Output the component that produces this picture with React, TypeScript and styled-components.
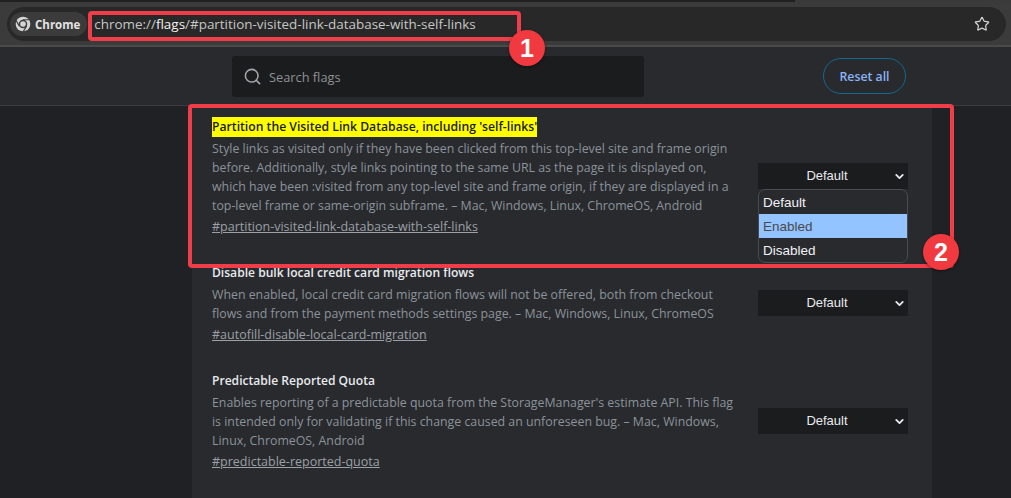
import * as React from "react";
import styled, { createGlobalStyle } from "styled-components";
import { Search, Star, ChevronDown } from "lucide-react";

const GlobalStyle = createGlobalStyle`
  html, body {
    margin: 0;
    padding: 0;
    height: 100%;
    overflow: hidden;
    background: #202124;
    font-family: "Open Sans", "Noto Sans", sans-serif;
  }
`;

const flags = [
  {
    title: "Partition the Visited Link Database, including 'self-links'",
    marked: true,
    lines: [
      "Style links as visited only if they have been clicked from this top-level site and frame origin",
      "before. Additionally, style links pointing to the same URL as the page it is displayed on,",
      "which have been :visited from any top-level site and frame origin, if they are displayed in a",
      "top-level frame or same-origin subframe. – Mac, Windows, Linux, ChromeOS, Android",
    ],
    link: "#partition-visited-link-database-with-self-links",
    open: true,
  },
  {
    title: "Disable bulk local credit card migration flows",
    lines: [
      "When enabled, local credit card migration flows will not be offered, both from checkout",
      "flows and from the payment methods settings page. – Mac, Windows, Linux, ChromeOS",
    ],
    link: "#autofill-disable-local-card-migration",
  },
  {
    title: "Predictable Reported Quota",
    lines: [
      "Enables reporting of a predictable quota from the StorageManager's estimate API. This flag",
      "is intended only for validating if this change caused an unforeseen bug. – Mac, Windows,",
      "Linux, ChromeOS, Android",
    ],
    link: "#predictable-reported-quota",
  },
];

const ChromeLogo = () => (
  <svg width="16" height="16" viewBox="0 0 24 24" fill="none">
    <circle cx="12" cy="12" r="11" fill="#d6d6d6" />
    <circle cx="12" cy="12" r="6.4" fill="#3c3c3c" />
    <circle cx="12" cy="12" r="4.2" fill="#d6d6d6" />
    <path d="M12 5.7h10.5M6.6 15.2 1.4 6.4M17.5 15.2 12 23.6" stroke="#3c3c3c" strokeWidth="1.7" />
  </svg>
);

const App: React.FunctionComponent = () => {
  return (
    <Page>
      <GlobalStyle />
      <TopStrip />
      <BrowserBar>
        <Omnibox>
          <SiteChip>
            <ChromeLogo />
            Chrome
          </SiteChip>
          <Url>
            chrome://<strong>flags</strong>/#partition-visited-link-database-with-self-links
          </Url>
          <StarButton>
            <Star size={16} strokeWidth={1.8} />
          </StarButton>
        </Omnibox>
      </BrowserBar>

      <FlagsHeader>
        <SearchBox>
          <Search size={19} strokeWidth={2} color="#a3a5a8" />
          Search flags
        </SearchBox>
        <ResetButton>Reset all</ResetButton>
      </FlagsHeader>

      <Main>
        <Card>
          {flags.map((flag) => (
            <FlagRow key={flag.link}>
              <FlagText>
                <FlagTitle>
                  {flag.marked ? <Mark>{flag.title}</Mark> : flag.title}
                </FlagTitle>
                <FlagDesc>
                  {flag.lines.map((line) => (
                    <div key={line}>{line}</div>
                  ))}
                </FlagDesc>
                <FlagLink>{flag.link}</FlagLink>
              </FlagText>
              <SelectWrap>
                <Select>
                  Default
                  <SelectChevron>
                    <ChevronDown size={13} strokeWidth={3.4} />
                  </SelectChevron>
                </Select>
                {flag.open && (
                  <Dropdown>
                    <Option>Default</Option>
                    <Option $active>Enabled</Option>
                    <Option>Disabled</Option>
                  </Dropdown>
                )}
              </SelectWrap>
            </FlagRow>
          ))}
        </Card>
      </Main>

      <RedBox $x={88} $y={11} $w={433} $h={30} />
      <RedBox $x={188} $y={104} $w={766} $h={164} />
      <Badge $x={509} $y={30}>1</Badge>
      <Badge $x={923} $y={234}>2</Badge>
    </Page>
  );
};

const Page = styled.div`
  position: relative;
  width: 1011px;
  height: 498px;
  overflow: hidden;
  background: #202124;
`;

const TopStrip = styled.div`
  height: 2px;
  background: linear-gradient(90deg, #202020 0, #202020 795px, #3a3a3a 795px);
`;

const BrowserBar = styled.div`
  height: 45px;
  padding: 5px 5px 0 7px;
  box-sizing: border-box;
  background: #3b3b3b;
  border-bottom: 2px solid #4a4a4a;
`;

const Omnibox = styled.div`
  display: flex;
  align-items: center;
  height: 34px;
  padding: 0 16px 0 3px;
  border-radius: 17px;
  background: #282828;
`;

const SiteChip = styled.div`
  display: flex;
  align-items: center;
  gap: 4px;
  height: 24px;
  padding: 0 7px 0 5px;
  border-radius: 12px;
  background: #3b3b3b;
  color: #e3e3e3;
  font: 700 11.5px "Open Sans", sans-serif;
`;

const Url = styled.div`
  flex: 1;
  margin-left: 7px;
  color: #c4c7c5;
  font: 400 13.45px "Open Sans", sans-serif;
  white-space: nowrap;

  strong {
    color: #f1f1f1;
    font-weight: 400;
  }
`;

const StarButton = styled.div`
  display: flex;
  color: #d4d4d4;
`;

const FlagsHeader = styled.div`
  display: flex;
  align-items: flex-start;
  height: 59px;
  padding: 9px 0 0 232px;
  box-sizing: border-box;
  background: #292a2d;
  border-bottom: 1px solid #3a3b3e;
`;

const SearchBox = styled.div`
  display: flex;
  align-items: center;
  gap: 7px;
  width: 412px;
  height: 41px;
  padding-left: 11px;
  box-sizing: border-box;
  border-radius: 3px;
  background: #1b1c1e;
  color: #8f9194;
  font: 400 12.8px "Open Sans", sans-serif;
`;

const ResetButton = styled.div`
  display: flex;
  align-items: center;
  justify-content: center;
  width: 83px;
  height: 36px;
  margin: 2px 0 0 179px;
  box-sizing: border-box;
  border: 1px solid #0f6a94;
  border-radius: 18px;
  color: #8ab4f8;
  font: 600 12.3px "Open Sans", sans-serif;
`;

const Main = styled.div`
  display: flex;
  padding-left: 192px;
`;

const Card = styled.div`
  width: 740px;
  height: 392px;
  background: #292a2d;
`;

const FlagRow = styled.div`
  display: flex;
  align-items: center;
  justify-content: space-between;
  padding: 10px 24px 16px 20px;
`;

const FlagText = styled.div`
  width: 530px;
`;

const FlagTitle = styled.div`
  height: 20px;
  margin-bottom: 3px;
  color: #e8eaed;
  font: 600 12.1px/21px "Open Sans", sans-serif;
`;

const Mark = styled.span`
  display: inline-block;
  height: 20px;
  background: #ffff00;
  color: #202124;
  font-size: 12.2px;
  line-height: 20px;
`;

const FlagDesc = styled.div`
  color: #8b939b;
  font: 400 12.35px/19px "Open Sans", sans-serif;
  white-space: nowrap;
`;

const FlagLink = styled.div`
  margin-top: 2px;
  color: #9aa0a6;
  font: 400 12.5px/19px "Open Sans", sans-serif;
  text-decoration: underline;
`;

const SelectWrap = styled.div`
  position: relative;
  width: 150px;
`;

const Select = styled.div`
  position: relative;
  height: 26px;
  padding-right: 12px;
  background: #1b1c1e;
  color: #e8eaed;
  font: 400 13px/26px "Liberation Sans", Arial, sans-serif;
  text-align: center;
`;

const SelectChevron = styled.span`
  position: absolute;
  right: 2px;
  top: 7px;
  display: flex;
  color: #e8eaed;
`;

const Dropdown = styled.div`
  position: absolute;
  top: 26px;
  left: 0;
  right: 0;
  border: 1px solid #4a4b4e;
  border-radius: 7px;
  overflow: hidden;
  background: #292a2d;
  z-index: 2;
`;

const Option = styled.div<{ $active?: boolean }>`
  height: 24px;
  padding-left: 4px;
  background: ${(p) => (p.$active ? "#93c4ff" : "transparent")};
  color: ${(p) => (p.$active ? "#4a4a4e" : "#f0f2f5")};
  font: 400 13.5px/26px "Liberation Sans", Arial, sans-serif;
`;

const RedBox = styled.div<{ $x: number; $y: number; $w: number; $h: number }>`
  position: absolute;
  left: ${(p) => p.$x}px;
  top: ${(p) => p.$y}px;
  width: ${(p) => p.$w}px;
  height: ${(p) => p.$h}px;
  box-sizing: border-box;
  border: 4px solid #ef3e4a;
  border-radius: 4px;
  z-index: 3;
`;

const Badge = styled.div<{ $x: number; $y: number }>`
  position: absolute;
  left: ${(p) => p.$x}px;
  top: ${(p) => p.$y}px;
  width: 36px;
  height: 36px;
  border-radius: 50%;
  background: #f13a40;
  color: #fff;
  font: 700 25px/36px "Liberation Sans", Arial, sans-serif;
  text-align: center;
  box-shadow: 0 1px 3px rgba(0, 0, 0, 0.45);
  z-index: 4;
`;

export default App;
